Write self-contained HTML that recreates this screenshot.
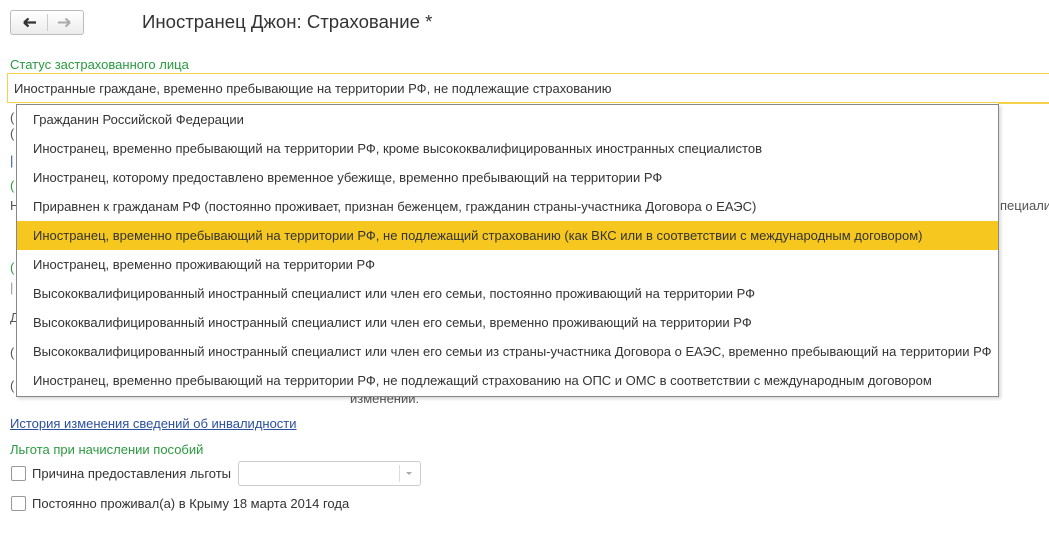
<!DOCTYPE html>
<html><head><meta charset="utf-8"><style>
body{margin:0;width:1049px;height:560px;background:#fff;font-family:"Liberation Sans","DejaVu Sans",sans-serif;font-size:13px;color:#333;position:relative;overflow:hidden}
.a{position:absolute;white-space:nowrap}
.nav{left:10px;top:10px;width:72px;height:23px;border:1px solid #bbb;border-radius:3px;background:linear-gradient(#fff,#ececec)}
.nav:after{content:"";position:absolute;left:36px;top:3px;height:17px;border-left:1px solid #ccc}
.g{color:#2a9a3f}
.dd{left:16px;top:104px;width:981px;height:291px;border:1px solid #888;background:#fff;box-shadow:2px 2px 3px rgba(0,0,0,.15)}
.row{position:absolute;left:0;width:981px;height:29px;line-height:30px;padding-left:16px;box-sizing:border-box;font-size:13px;color:#333}
.hl{background:#f6c81f}
.cb{width:13px;height:13px;border:1px solid #999;border-radius:2px;background:#fff}
</style></head><body>
<div class="a nav">
<svg style="position:absolute;left:12px;top:6px" width="14" height="11" viewBox="0 0 14 11"><path d="M1 5.5H13M1 5.5L5.5 1.5M1 5.5L5.5 9.5" stroke="#333" stroke-width="2.2" fill="none"/></svg>
<svg style="position:absolute;left:46px;top:6px" width="14" height="11" viewBox="0 0 14 11"><path d="M1 5.5H13M13 5.5L8.5 1.5M13 5.5L8.5 9.5" stroke="#aaa" stroke-width="2" fill="none"/></svg>
</div>
<div class="a" style="left:142px;top:11px;font-size:18.6px;color:#333">Иностранец Джон: Страхование *</div>
<div class="a g" style="left:10px;top:57px">Статус застрахованного лица</div>
<div class="a" style="left:7px;top:73px;width:1050px;height:28px;border:1px solid #f2d24a;border-right:none"></div>
<div class="a" style="left:14px;top:81px">Иностранные граждане, временно пребывающие на территории РФ, не подлежащие страхованию</div>
<div class="a" style="left:998px;top:102px;width:60px;border-top:2px solid #f2d24a"></div>
<div class="a" style="left:10px;top:110px;color:#555">(</div>
<div class="a" style="left:10px;top:126px;color:#555">(</div>
<div class="a" style="left:10px;top:153px;color:#3355aa">|</div>
<div class="a g" style="left:10px;top:178px">(</div>
<div class="a" style="left:10px;top:198px;color:#555">Н</div>
<div class="a g" style="left:10px;top:260px">(</div>
<div class="a" style="left:10px;top:280px;color:#999">|</div>
<div class="a" style="left:10px;top:310px;color:#555">Д</div>
<div class="a" style="left:10px;top:345px;color:#555">(</div>
<div class="a" style="left:10px;top:378px;color:#555">(</div>
<div class="a" style="left:1000px;top:198px;color:#555">пециалис</div>
<div class="a" style="left:350px;top:391px;color:#555">изменений.</div>
<div class="a dd">
<div class="row" style="top:0">Гражданин Российской Федерации</div>
<div class="row" style="top:29px">Иностранец, временно пребывающий на территории РФ, кроме высококвалифицированных иностранных специалистов</div>
<div class="row" style="top:58px">Иностранец, которому предоставлено временное убежище, временно пребывающий на территории РФ</div>
<div class="row" style="top:87px">Приравнен к гражданам РФ (постоянно проживает, признан беженцем, гражданин страны-участника Договора о ЕАЭС)</div>
<div class="row hl" style="top:116px">Иностранец, временно пребывающий на территории РФ, не подлежащий страхованию (как ВКС или в соответствии с международным договором)</div>
<div class="row" style="top:145px">Иностранец, временно проживающий на территории РФ</div>
<div class="row" style="top:174px">Высококвалифицированный иностранный специалист или член его семьи, постоянно проживающий на территории РФ</div>
<div class="row" style="top:203px">Высококвалифицированный иностранный специалист или член его семьи, временно проживающий на территории РФ</div>
<div class="row" style="top:232px">Высококвалифицированный иностранный специалист или член его семьи из страны-участника Договора о ЕАЭС, временно пребывающий на территории РФ</div>
<div class="row" style="top:261px">Иностранец, временно пребывающий на территории РФ, не подлежащий страхованию на ОПС и ОМС в соответствии с международным договором</div>
</div>
<div class="a" style="left:10px;top:416px;color:#2b50a0;text-decoration:underline">История изменения сведений об инвалидности</div>
<div class="a g" style="left:10px;top:442px">Льгота при начислении пособий</div>
<div class="a cb" style="left:11px;top:466px"></div>
<div class="a" style="left:32px;top:466px">Причина предоставления льготы</div>
<div class="a" style="left:238px;top:461px;width:181px;height:23px;border:1px solid #ccc;border-radius:3px"><div style="position:absolute;left:160px;top:3px;height:17px;border-left:1px solid #ddd"></div><div style="position:absolute;left:167px;top:10px;border:3px solid transparent;border-top:3px solid #aaa"></div></div>
<div class="a cb" style="left:11px;top:496px"></div>
<div class="a" style="left:32px;top:496px">Постоянно проживал(а) в Крыму 18 марта 2014 года</div>
</body></html>
